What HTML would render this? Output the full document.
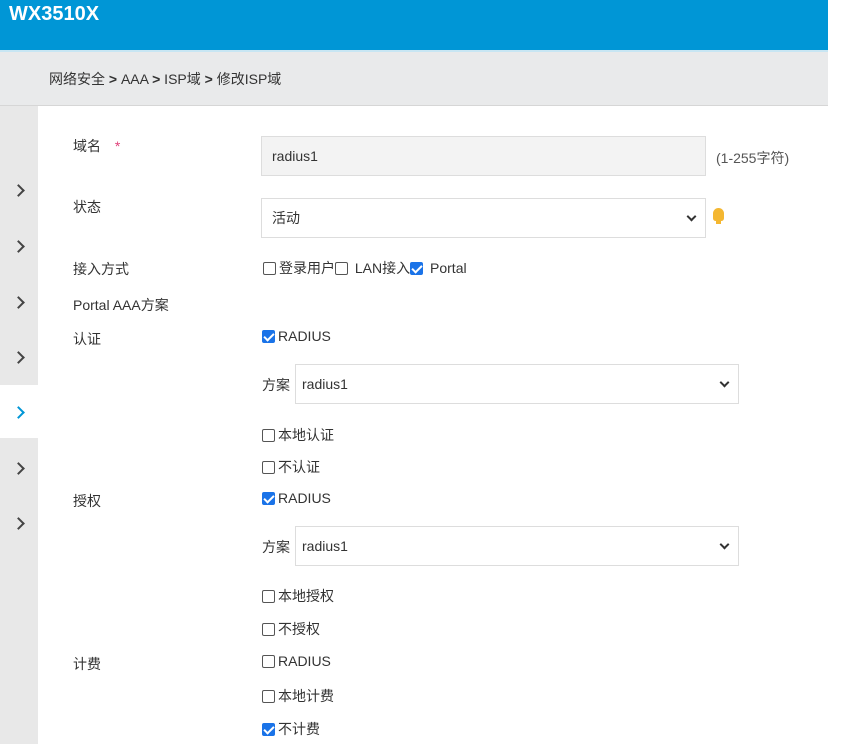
<!DOCTYPE html>
<html><head><meta charset="utf-8"><style>
*{margin:0;padding:0;box-sizing:border-box}
body{width:854px;height:744px;background:#fff;font-family:"Liberation Sans","Noto Sans CJK SC",sans-serif;font-size:14px;color:#333;position:relative;overflow:hidden}
.a{position:absolute}
.hdr{left:0;top:0;width:828px;height:50px;background:#0096d6}
.logo{left:9px;top:3px;color:#fff;font-weight:bold;font-size:20px}
.bc{left:0;top:50px;width:828px;height:56px;background:#e9eaeb;border-top:2px solid #c8e6f3;border-bottom:1px solid #d6d6d6}
.bct{left:49px;top:69px;font-size:14px;color:#333}
.side{left:0;top:106px;width:38px;height:638px;background:#e8e8e8}
.sel{left:0;top:385px;width:38px;height:53px;background:#fff}
.chev{left:16px;width:9px;height:9px;border-right:2px solid #444;border-top:2px solid #444;transform:rotate(45deg)}
.lbl{left:73px}
.box{border:1px solid #ddd;height:40px;padding-left:10px;line-height:38px;background:#fff}
.cb{display:inline-block;width:13px;height:13px;border:1px solid #555;border-radius:2px;vertical-align:-2px;margin-right:3px;background:#fff;position:relative}
.cb.on{background:#1a73e8;border-color:#1a73e8}
.cb.on:after{content:"";position:absolute;left:3px;top:0px;width:4px;height:8px;border-right:2px solid #fff;border-bottom:2px solid #fff;transform:rotate(45deg)}
.dd{position:absolute;right:10px;top:14px;width:7px;height:7px;border-right:2px solid #333;border-bottom:2px solid #333;transform:rotate(45deg)}
</style></head><body>
<div class="a hdr"></div><div class="a logo">WX3510X</div>
<div class="a bc"></div><div class="a bct">网络安全 <b>&gt;</b> AAA <b>&gt;</b> ISP域 <b>&gt;</b> 修改ISP域</div>
<div class="a side"></div><div class="a sel"></div>
<div class="a chev" style="top:186px;left:14px"></div>
<div class="a chev" style="top:242px;left:14px"></div>
<div class="a chev" style="top:298px;left:14px"></div>
<div class="a chev" style="top:353px;left:14px"></div>
<div class="a chev" style="top:408px;left:14px;border-color:#0096d6"></div>
<div class="a chev" style="top:464px;left:14px"></div>
<div class="a chev" style="top:519px;left:14px"></div>

<div class="a lbl" style="top:136px">域名 <span style="color:#e0407a;margin-left:10px">*</span></div>
<div class="a box" style="left:261px;top:136px;width:445px;background:#f3f3f3">radius1</div>
<div class="a" style="left:716px;top:148px;color:#555">(1-255字符)</div>

<div class="a lbl" style="top:197px">状态</div>
<div class="a box" style="left:261px;top:198px;width:445px">活动<span class="dd"></span></div>
<div class="a" style="left:713px;top:208px;width:11px;height:13px;background:#f4b731;border-radius:6px 6px 3px 3px"></div>
<div class="a" style="left:716px;top:219px;width:5px;height:5px;background:#f4b731"></div>

<div class="a lbl" style="top:259px">接入方式</div>
<div class="a" style="left:263px;top:258px"><span class="cb"></span>登录用户<span class="cb"></span> LAN接入<span class="cb on"></span> Portal</div>
<div class="a lbl" style="top:295px">Portal AAA方案</div>

<div class="a lbl" style="top:329px">认证</div>
<div class="a" style="left:262px;top:328px"><span class="cb on"></span>RADIUS</div>
<div class="a" style="left:262px;top:375px">方案</div>
<div class="a box" style="left:295px;top:364px;width:444px;line-height:38px;padding-left:6px">radius1<span class="dd"></span></div>
<div class="a" style="left:262px;top:425px"><span class="cb"></span>本地认证</div>
<div class="a" style="left:262px;top:457px"><span class="cb"></span>不认证</div>

<div class="a lbl" style="top:491px">授权</div>
<div class="a" style="left:262px;top:490px"><span class="cb on"></span>RADIUS</div>
<div class="a" style="left:262px;top:537px">方案</div>
<div class="a box" style="left:295px;top:526px;width:444px;padding-left:6px">radius1<span class="dd"></span></div>
<div class="a" style="left:262px;top:586px"><span class="cb"></span>本地授权</div>
<div class="a" style="left:262px;top:619px"><span class="cb"></span>不授权</div>

<div class="a lbl" style="top:654px">计费</div>
<div class="a" style="left:262px;top:653px"><span class="cb"></span>RADIUS</div>
<div class="a" style="left:262px;top:686px"><span class="cb"></span>本地计费</div>
<div class="a" style="left:262px;top:719px"><span class="cb on"></span>不计费</div>
</body></html>
